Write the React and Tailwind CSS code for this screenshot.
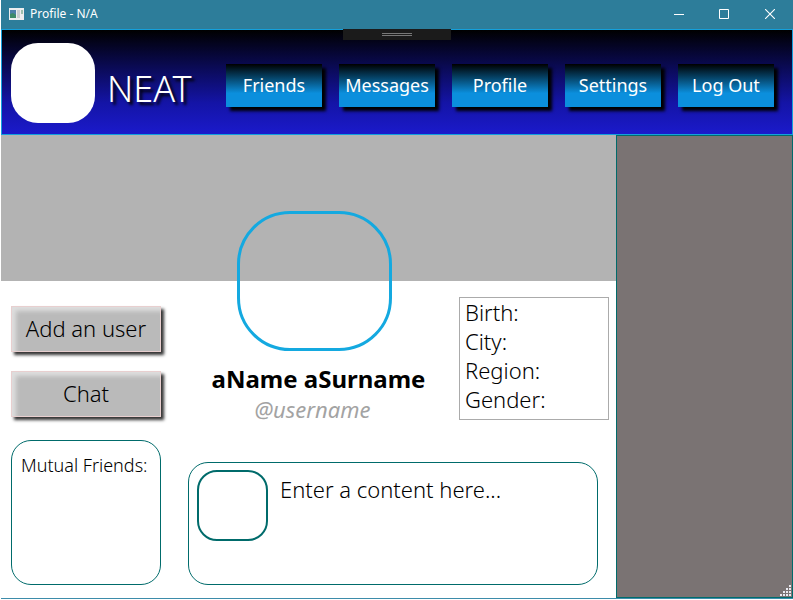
import React from 'react';

const navItems = ['Friends', 'Messages', 'Profile', 'Settings', 'Log Out'];
const details = ['Birth:', 'City:', 'Region:', 'Gender:'];

function AppIcon() {
  return (
    <svg width="15" height="12" viewBox="0 0 15 12" aria-hidden="true">
      <rect width="15" height="12" fill="#eceeef" />
      <rect x="1" y="2" width="6" height="8" fill="#4d7fa8" />
      <path d="M1 6l3-1 3 2v3H1z" fill="#3d8a68" />
      <rect x="8" y="2" width="3" height="8" fill="#c9cdd0" />
      <rect x="12" y="2" width="2" height="4" fill="#9dc0ae" />
    </svg>
  );
}

function TitleBar() {
  return (
    <div className="flex h-[29px] items-center bg-[#2d7d9a] pb-[2px] pl-2 text-white">
      <AppIcon />
      <h1 className="ml-[6px] flex-1 text-[12px] leading-4">Profile - N/A</h1>
      <div className="flex h-[26px]">
        <button aria-label="Minimize" className="grid w-[45px] place-items-center">
          <svg width="10" height="10" viewBox="0 0 10 10"><path d="M0 5.5h10" stroke="#fff" /></svg>
        </button>
        <button aria-label="Maximize" className="grid w-[46px] place-items-center">
          <svg width="10" height="10" viewBox="0 0 10 10"><path d="M.5.5h9v9h-9z" fill="none" stroke="#fff" /></svg>
        </button>
        <button aria-label="Close" className="grid w-[46px] place-items-center">
          <svg width="10" height="10" viewBox="0 0 10 10"><path d="M0 0l10 10M10 0L0 10" stroke="#fff" strokeWidth="1.1" /></svg>
        </button>
      </div>
    </div>
  );
}

function Header() {
  return (
    <header className="relative flex h-[106px] border border-[#14a0dc] bg-linear-to-b/srgb from-black via-[#1414a6] via-70% to-[#1b1acb] pr-[18px] pl-[9px] text-white">
      <div className="absolute -top-px left-1/2 flex h-[11px] w-[108px] -translate-x-1/2 flex-col items-center gap-px bg-[#1b1b1b] pt-1">
        <div className="h-px w-[30px] bg-[#777]" />
        <div className="h-px w-[30px] bg-[#777]" />
      </div>
      <div className="mt-[13px] h-20 w-[84px] rounded-[27px] bg-white" />
      <p className="mt-9 ml-3 text-[36px] leading-[46px] font-light [text-shadow:3px_3px_3px_#000]">NEAT</p>
      <nav className="mt-[34px] ml-auto flex h-[43px] gap-[17px]">
        {navItems.map((item) => (
          <button
            key={item}
            className="w-24 bg-linear-to-b/srgb from-black to-[#0b8fdd] to-68% pb-[2px] text-[18px] leading-6 whitespace-nowrap shadow-[4px_4px_3px_#000]"
          >
            {item}
          </button>
        ))}
      </nav>
    </header>
  );
}

function ActionButton({ children }) {
  return (
    <button className="h-[46px] w-full border border-[#e8cfcf] bg-[#bababa] pb-[2px] text-[22px] leading-7 font-light text-black shadow-[3px_3px_3px_#333,inset_4px_4px_4px_#dedede]">
      {children}
    </button>
  );
}

function ResizeGrip() {
  const dots = [[9, 0], [6, 3], [9, 3], [3, 6], [6, 6], [9, 6], [0, 9], [3, 9], [6, 9], [9, 9]];
  return (
    <svg className="absolute right-px bottom-px" width="11" height="11" viewBox="0 0 11 11" aria-hidden="true">
      {dots.map(([x, y]) => (
        <rect key={`${x}-${y}`} x={x} y={y} width="2" height="2" fill="#e9e9f0" />
      ))}
    </svg>
  );
}

export default function App() {
  return (
    <div className="flex min-h-screen flex-col bg-white pb-px pl-px font-['Noto_Sans','Open_Sans',sans-serif] text-black">
      <TitleBar />
      <Header />
      <div className="flex flex-1 border-b border-[#3d8caa]">
        <main className="flex min-w-0 flex-1 flex-col">
          <div className="h-[146px] bg-[#b3b3b3]" />
          <div className="flex flex-1 gap-[27px] pr-[7px] pb-[13px] pl-[10px]">
            <div className="flex w-[150px] flex-col pt-[25px]">
              <div className="flex flex-col gap-[19px]">
                <ActionButton>Add an user</ActionButton>
                <ActionButton>Chat</ActionButton>
              </div>
              <section className="mt-[23px] flex-1 rounded-[20px] border border-[#006b6b] px-[9px] pt-3">
                <h2 className="text-[18px] leading-6 font-light whitespace-nowrap">Mutual Friends:</h2>
              </section>
            </div>
            <div className="flex min-w-0 flex-1 flex-col">
              <div className="flex gap-[18px]">
                <div className="-mt-[70px] flex flex-1 flex-col items-center">
                  <div className="h-[140px] w-[155px] rounded-[53px] border-3 border-[#14a9e0]" />
                  <h2 className="mt-3 pl-2 text-[24px] leading-8 font-bold whitespace-nowrap">aName aSurname</h2>
                  <p className="pr-1 text-[22px] leading-7 text-[#a3a3a3] italic">@username</p>
                </div>
                <ul className="mt-4 h-[123px] w-[150px] border border-[#ababab] pl-[5px] text-[22px] leading-[29px] font-light">
                  {details.map((label) => (
                    <li key={label}>{label}</li>
                  ))}
                </ul>
              </div>
              <section className="mt-auto mr-[11px] flex h-[123px] gap-2 rounded-[20px] border border-[#006b6b] p-2">
                <div className="-mt-px size-[71px] shrink-0 rounded-[20px] border-2 border-[#006b6b]" />
                <textarea
                  aria-label="Post content"
                  defaultValue="Enter a content here..."
                  className="min-w-0 flex-1 resize-none bg-transparent px-1 pt-1 text-[22px] leading-7 font-light outline-none"
                />
              </section>
            </div>
          </div>
        </main>
        <aside className="relative w-[177px] border border-[#006b6b] bg-[#7a7373]">
          <ResizeGrip />
        </aside>
      </div>
    </div>
  );
}
